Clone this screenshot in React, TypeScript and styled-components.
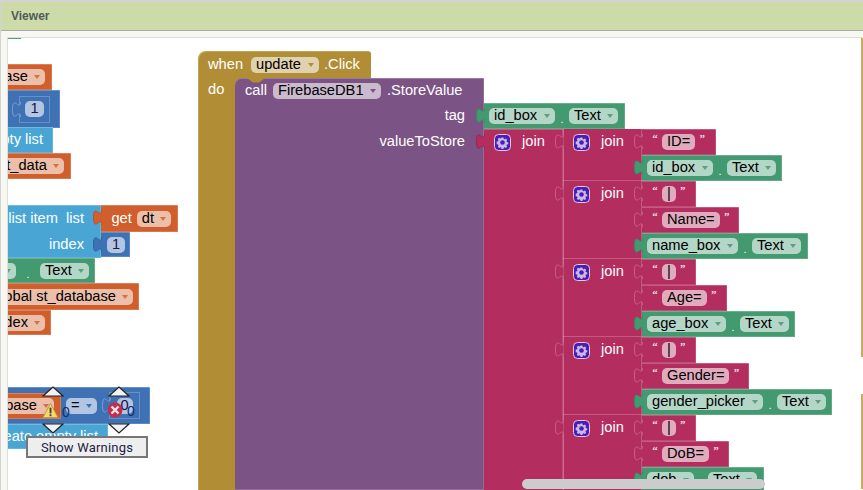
import styled, { createGlobalStyle } from "styled-components";

const ORANGE = "#d05f2d";
const BLUE = "#3f71b5";
const SKY = "#49a6d4";
const GREEN = "#439970";
const PINK = "#b32d5e";
const PURPLE = "#7c5385";
const OCHRE = "#b18e35";

const GlobalStyle = createGlobalStyle`
  html, body {
    margin: 0;
    padding: 0;
    height: 100%;
    overflow: hidden;
    background: #f7f8f2;
  }
  * {
    box-sizing: border-box;
  }
`;

const Page = styled.div`
  width: 863px;
  height: 490px;
  display: flex;
  flex-direction: column;
  border-top: 2px solid #d3d3d3;
  border-left: 1px solid #d3d3d3;
  font-family: "Liberation Sans", Arial, sans-serif;
`;

const BoxHeader = styled.div`
  height: 29px;
  flex-shrink: 0;
  display: flex;
  align-items: center;
  padding-left: 10px;
  background: #cddba9;
  border-bottom: 1px solid #aaaaaa;
  color: #505a5a;
  font-size: 12px;
  font-weight: 700;
`;

const Canvas = styled.div`
  position: relative;
  flex: 1;
  margin: 6px 0 0 6px;
  background: #ffffff;
  border-top: 1px solid #dddddd;
  border-left: 1px solid #dddddd;
  overflow: hidden;
`;

// labels sit a pixel above the middle of a block, fields do not
const Face = styled.div<{ $bg: string }>`
  display: flex;
  align-items: center;
  padding-bottom: 2px;
  background: ${(p) => p.$bg};
  color: #ffffff;
  font-size: 14.67px;
  white-space: nowrap;
  box-shadow:
    inset 0 1px 0 rgba(255, 255, 255, 0.22),
    inset -1px -1px 0 rgba(255, 255, 255, 0.16);
`;

// a loose block on the workspace, its left part runs out of the view
const Loose = styled(Face)<{ $x: number; $y: number; $w: number; $h: number; $pr?: number }>`
  position: absolute;
  left: ${(p) => p.$x}px;
  top: ${(p) => p.$y}px;
  width: ${(p) => p.$w}px;
  height: ${(p) => p.$h}px;
  justify-content: flex-end;
  padding-right: ${(p) => p.$pr ?? 7}px;
  gap: 5px;
`;

const Field = styled.span<{ $w?: number }>`
  display: inline-flex;
  align-items: center;
  justify-content: space-between;
  flex-shrink: 0;
  height: 16px;
  width: ${(p) => (p.$w ? `${p.$w}px` : "auto")};
  margin-top: 2px;
  padding: 0 5px 2px 5px;
  border-radius: 5px;
  background: rgba(255, 255, 255, 0.6);
  color: #000000;
  font-size: 14.67px;
  line-height: 14px;
`;

const Arrow = styled.i<{ $c: string }>`
  display: inline-block;
  flex-shrink: 0;
  width: 0;
  height: 0;
  margin: 2px 0 0 6px;
  border-left: 3px solid transparent;
  border-right: 3px solid transparent;
  border-top: 4px solid ${(p) => p.$c};
`;

const Dot = styled.span`
  width: 14px;
  margin-top: 9px;
  text-align: center;
  font-size: 11px;
  line-height: 1;
`;

const Pick = ({ text, c, w }: { text: string; c: string; w?: number }) => (
  <Field $w={w}>
    {text}
    <Arrow $c={c} />
  </Field>
);

const TabSvg = styled.svg`
  position: absolute;
  left: -8px;
  top: 5px;
  width: 9px;
  height: 16px;
  overflow: visible;
`;

// the puzzle knob on the left side of a value block
const Tab = ({ fill, stroke }: { fill: string; stroke: string }) => (
  <TabSvg viewBox="0 0 9 16">
    <path d="M8.5,0 c0,10 -8,-8 -8,7.5 s8,-2.5 8,7.5" fill={fill} stroke={stroke} strokeWidth="1" />
  </TabSvg>
);

const Hat = styled.div`
  position: absolute;
  left: 190px;
  top: 13px;
  width: 620px;
  display: flex;
  flex-direction: column;
`;

const HatTop = styled(Face)`
  width: 173px;
  height: 27px;
  padding: 0 9px 2px 10px;
  border-radius: 8px 3px 0 0;
  box-shadow: inset 1px 1px 0 rgba(255, 255, 255, 0.2);
  gap: 5px;

  ${Field} {
    margin-left: 3px;
  }
`;

const HatBody = styled.div`
  display: flex;
  align-items: stretch;
`;

const Arm = styled(Face)`
  width: 37px;
  height: 412px;
  flex-shrink: 0;
  align-items: flex-start;
  padding: 3px 0 0 10px;
  box-shadow: inset 1px 0 0 rgba(255, 255, 255, 0.2);
`;

const Call = styled.div`
  position: relative;
  display: flex;
  align-items: flex-start;

  &::before {
    content: "";
    position: absolute;
    left: 0;
    top: 0;
    width: 10px;
    height: 10px;
    background: ${OCHRE};
  }
`;

const Notch = styled.svg`
  position: absolute;
  left: 12px;
  top: 0;
  width: 19px;
  height: 6px;
  z-index: 2;
`;

const CallPanel = styled(Face)`
  position: relative;
  width: 249px;
  height: 412px;
  flex-shrink: 0;
  flex-direction: column;
  align-items: stretch;
  border-radius: 7px 0 0 0;
`;

const CallHead = styled.div`
  height: 25px;
  display: flex;
  align-items: center;
  padding: 0 0 2px 10px;
  gap: 6px;
`;

const ArgLabel = styled.div`
  height: 26px;
  display: flex;
  align-items: center;
  justify-content: flex-end;
  padding: 0 19px 2px 0;
`;

const Args = styled.div`
  display: flex;
  flex-direction: column;
  align-items: flex-start;
  margin-top: 25px;
`;

const Getter = styled(Face)<{ $w: number }>`
  position: relative;
  width: ${(p) => p.$w}px;
  height: 26px;
  padding-left: 5px;
`;

const Join = styled.div`
  position: relative;
  display: flex;
  align-items: stretch;
`;

const JoinColumn = styled(Face)`
  position: relative;
  flex-shrink: 0;
  width: 79px;
  align-items: flex-start;
`;

const InnerColumn = styled(JoinColumn)`
  box-shadow:
    inset 1px 0 0 rgba(255, 255, 255, 0.3),
    inset -1px 0 0 rgba(255, 255, 255, 0.2),
    inset 0 -1px 0 rgba(255, 255, 255, 0.22);
`;

const JoinHead = styled.div`
  height: 26px;
  display: flex;
  align-items: center;
  padding: 0 0 2px 10px;
  gap: 11px;
`;

const Mutator = styled.svg`
  width: 17px;
  height: 17px;
  margin-top: 2px;
`;

const Stack = styled.div`
  display: flex;
  flex-direction: column;
`;

const JoinRow = styled.div`
  display: flex;
  align-items: stretch;
`;

const StringBlock = styled(Face)<{ $w: number }>`
  position: relative;
  width: ${(p) => p.$w}px;
  height: 26px;
  padding-left: 10px;
  gap: 4px;
  color: #f2dde6;
`;

const Quote = styled.span`
  width: 6px;
  margin-top: -6px;
  font-family: "Liberation Serif", serif;
  font-size: 11px;
  font-weight: 700;
  text-align: center;
`;

const Text = ({ value, w }: { value: string; w: number }) => (
  <StringBlock $bg={PINK} $w={w}>
    <Tab fill={PINK} stroke="#c8608a" />
    <Quote>“</Quote>
    <Field>{value}</Field>
    <Quote>”</Quote>
  </StringBlock>
);

const Prop = ({ name, w, f }: { name: string; w: number; f: number }) => (
  <Getter $bg={GREEN} $w={w}>
    <Tab fill={GREEN} stroke="#3a8a63" />
    <Pick text={name} c="#5f9f80" w={f} />
    <Dot>.</Dot>
    <Pick text="Text" c="#5f9f80" w={49} />
  </Getter>
);

const Gear = () => (
  <Mutator viewBox="0 0 17 17">
    <rect x="0.5" y="0.5" width="16" height="16" rx="4" fill="#4a1eb4" stroke="#e5c9da" />
    <path
      d="M7.6 3.5h1.8l.4 1.4.8.4 1.3-.7 1.3 1.3-.7 1.3.4.8 1.4.4v1.8l-1.4.4-.4.8.7 1.3-1.3 1.3-1.3-.7-.8.4-.4 1.4H7.6l-.4-1.4-.8-.4-1.3.7-1.3-1.3.7-1.3-.4-.8-1.4-.4V7.6l1.4-.4.4-.8-.7-1.3 1.3-1.3 1.3.7.8-.4z"
      fill="#c9b8e8"
    />
    <circle cx="8.5" cy="8.5" r="2.3" fill="#4a1eb4" />
  </Mutator>
);

const STRING_W: Record<string, number> = {
  "ID=": 74,
  "|": 54,
  "Name=": 97,
  "Age=": 85,
  "Gender=": 107,
  "DoB=": 87,
};

const Group = ({ top, bottom }: { top: string[]; bottom: [string, number, number] }) => (
  <JoinRow>
    <InnerColumn $bg={PINK}>
      <Tab fill={PINK} stroke="#c8608a" />
      <JoinHead>
        <Gear />
        join
      </JoinHead>
    </InnerColumn>
    <Stack>
      {top.map((t) => (
        <Text key={t} value={t} w={STRING_W[t]} />
      ))}
      <Prop name={bottom[0]} w={bottom[1]} f={bottom[2]} />
    </Stack>
  </JoinRow>
);

const Slot = styled.span<{ $ml?: number }>`
  position: relative;
  display: flex;
  align-items: center;
  justify-content: center;
  flex-shrink: 0;
  width: 31px;
  height: 27px;
  margin-top: 2px;
  margin-left: ${(p) => p.$ml ?? 0}px;
  margin-right: 3px;
  padding-bottom: 2px;
  background: ${BLUE};
  border: 1px solid rgba(255, 255, 255, 0.22);
`;

const NumField = styled(Field)`
  justify-content: center;
  padding: 0 0 2px;
  color: #22104a;
`;

const Inset = styled(Face)`
  width: 122px;
  height: 26px;
  flex-shrink: 0;
  margin-top: 2px;
  justify-content: flex-end;
  padding-right: 7px;
`;

const ListLines = styled.div`
  display: flex;
  flex-direction: column;
  align-items: flex-end;
  padding-right: 10px;
`;

const ListLine = styled.div`
  height: 26px;
  line-height: 26px;
`;

const Popup = styled.button`
  position: absolute;
  left: 18px;
  top: 398px;
  width: 122px;
  height: 22px;
  padding: 0;
  background: #eeeeee;
  border: 2px solid #777777;
  color: #222244;
  font-family: Roboto, sans-serif;
  font-size: 13px;
  letter-spacing: 0.2px;
  z-index: 5;
`;

const Marker = styled.svg<{ $x: number; $y: number }>`
  position: absolute;
  left: ${(p) => p.$x}px;
  top: ${(p) => p.$y}px;
  width: 22px;
  height: 11px;
  z-index: 4;
`;

const Badge = styled.svg<{ $x: number; $y: number; $w: number }>`
  position: absolute;
  left: ${(p) => p.$x}px;
  top: ${(p) => p.$y}px;
  width: ${(p) => p.$w}px;
  height: ${(p) => p.$w}px;
  z-index: 3;
`;

const Count = styled.span<{ $x: number; $y: number }>`
  position: absolute;
  left: ${(p) => p.$x}px;
  top: ${(p) => p.$y}px;
  color: #10306e;
  font-size: 14px;
  line-height: 14px;
  z-index: 3;
`;

const Edge = styled.div<{ $y: number; $h: number }>`
  position: absolute;
  right: 0;
  top: ${(p) => p.$y}px;
  width: 2px;
  height: ${(p) => p.$h}px;
  background: #c9a961;
`;

const Scrap = styled.div`
  position: absolute;
  left: 0;
  top: 0;
  width: 13px;
  height: 1px;
  background: #5b9a7b;
`;

const Scrollbar = styled.div`
  position: absolute;
  left: 514px;
  top: 441px;
  width: 243px;
  height: 10px;
  border-radius: 5px;
  background: #cccccc;
  z-index: 6;
`;

const Pointer = ({ x, y, down }: { x: number; y: number; down?: boolean }) => (
  <Marker $x={x} $y={y} viewBox="0 0 22 11">
    <path
      d={down ? "M1,1 L21,1 L11,10 Z" : "M1,10 L21,10 L11,1 Z"}
      fill="#f2f2f2"
      stroke="#222222"
      strokeWidth="1.2"
    />
  </Marker>
);

const App = () => (
  <>
    <GlobalStyle />
    <Page>
      <BoxHeader>Viewer</BoxHeader>
      <Canvas>
        <Scrap />

        <Loose $bg={ORANGE} $x={-60} $y={26} $w={104} $h={26}>
          <Pick text="st_database" c="#d8703f" />
        </Loose>
        <Loose $bg={BLUE} $x={-60} $y={52} $w={112} $h={38}>
          <Slot>
            <Tab fill={BLUE} stroke="#7c9dd0" />
            <NumField $w={19}>1</NumField>
          </Slot>
        </Loose>
        <Loose $bg={SKY} $x={-60} $y={89} $w={105} $h={26} $pr={10}>
          empty list
        </Loose>
        <Loose $bg={ORANGE} $x={-60} $y={115} $w={123} $h={26}>
          <Pick text="st_data" c="#d8703f" />
        </Loose>

        <Loose $bg={SKY} $x={-60} $y={167} $w={153} $h={53}>
          <ListLines>
            <ListLine>select list item&nbsp; list</ListLine>
            <ListLine>index</ListLine>
          </ListLines>
        </Loose>
        <Loose $bg={ORANGE} $x={93} $y={167} $w={77} $h={27}>
          <Tab fill={ORANGE} stroke="#b8562a" />
          get
          <Pick text="dt" c="#d8703f" />
        </Loose>
        <Loose $bg={BLUE} $x={93} $y={194} $w={29} $h={25} $pr={5}>
          <Tab fill={BLUE} stroke="#33609e" />
          <NumField $w={18}>1</NumField>
        </Loose>
        <Loose $bg={GREEN} $x={-60} $y={220} $w={147} $h={25} $pr={6}>
          <Pick text="st_box" c="#5f9f80" />
          <Dot>.</Dot>
          <Pick text="Text" c="#5f9f80" w={49} />
        </Loose>
        <Loose $bg={ORANGE} $x={-60} $y={245} $w={191} $h={27} $pr={6}>
          <Pick text="set global st_database" c="#d8703f" />
        </Loose>
        <Loose $bg={ORANGE} $x={-60} $y={272} $w={103} $h={25} $pr={6}>
          <Pick text="index" c="#d8703f" />
        </Loose>

        <Loose $bg={BLUE} $x={-60} $y={349} $w={202} $h={37}>
          <Inset $bg={ORANGE}>
            <Pick text="st_database" c="#d8703f" />
          </Inset>
          <Pick text="=" c={BLUE} w={31} />
          <Slot $ml={7}>
            <Tab fill={BLUE} stroke="#7c9dd0" />
            <NumField $w={16}>0</NumField>
          </Slot>
        </Loose>
        <Loose $bg={SKY} $x={-60} $y={386} $w={160} $h={25} $pr={10}>
          create empty list
        </Loose>

        <Hat>
          <HatTop $bg={OCHRE}>
            when
            <Pick text="update" c="#b18e35" w={68} />
            .Click
          </HatTop>
          <HatBody>
            <Arm $bg={OCHRE}>do</Arm>
            <Call>
              <CallPanel $bg={PURPLE}>
                <CallHead>
                  call
                  <Pick text="FirebaseDB1" c="#7c5385" w={108} />
                  .StoreValue
                </CallHead>
                <ArgLabel>tag</ArgLabel>
                <ArgLabel>valueToStore</ArgLabel>
              </CallPanel>
              <Notch viewBox="0 0 19 6">
                <path d="M0,0 L6,4.5 L12,4.5 L18,0 Z" fill={OCHRE} />
              </Notch>
              <Args>
                <Prop name="id_box" w={141} f={66} />
                <Join>
                  <JoinColumn $bg={PINK}>
                    <Tab fill={PINK} stroke="#9a2650" />
                    <JoinHead>
                      <Gear />
                      join
                    </JoinHead>
                  </JoinColumn>
                  <Stack>
                    <Group top={["ID="]} bottom={["id_box", 140, 66]} />
                    <Group top={["|", "Name="]} bottom={["name_box", 166, 91]} />
                    <Group top={["|", "Age="]} bottom={["age_box", 153, 79]} />
                    <Group top={["|", "Gender="]} bottom={["gender_picker", 190, 116]} />
                    <Group top={["|", "DoB="]} bottom={["dob", 122, 47]} />
                  </Stack>
                </Join>
              </Args>
            </Call>
          </HatBody>
        </Hat>

        <Edge $y={0} $h={319} />
        <Edge $y={356} $h={95} />

        <Pointer x={34} y={348} />
        <Pointer x={34} y={385} down />
        <Pointer x={100} y={348} />
        <Pointer x={100} y={385} down />

        <Badge $x={34} $y={364} $w={17} viewBox="0 0 18 18">
          <path d="M9,1.5 L17,16.5 L1,16.5 Z" fill="#f6d96a" stroke="#b59a45" strokeLinejoin="round" />
          <rect x="8" y="6" width="2" height="6" fill="#444444" />
          <rect x="8" y="13" width="2" height="2" fill="#444444" />
        </Badge>
        <Count $x={54} $y={367}>0</Count>

        <Badge $x={99} $y={364} $w={16} viewBox="0 0 16 16">
          <circle cx="8" cy="8" r="7.5" fill="#c22f4e" />
          <path d="M4.5,4.5 L11.5,11.5 M11.5,4.5 L4.5,11.5" stroke="#f4e3e6" strokeWidth="2.4" />
        </Badge>
        <Count $x={119} $y={366}>0</Count>

        <Popup type="button">Show Warnings</Popup>
        <Scrollbar />
      </Canvas>
    </Page>
  </>
);

export default App;
